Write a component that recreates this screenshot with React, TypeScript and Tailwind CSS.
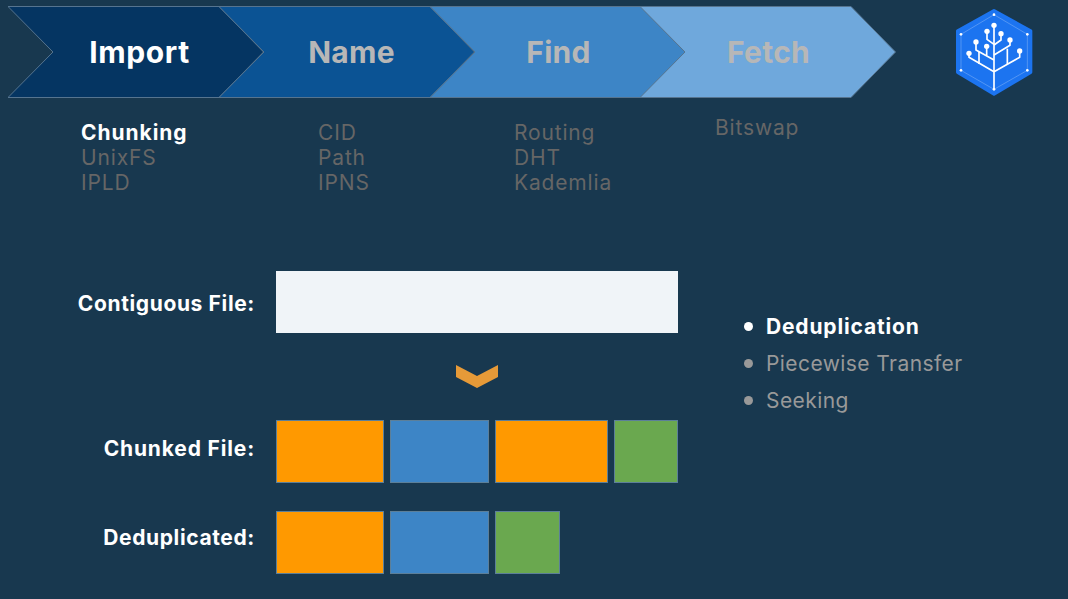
import React from 'react';

const STEPS = [
    { label: 'Import', fill: '#053562', text: 'text-white tracking-[0.02em]', box: 'pl-[7px]' },
    { label: 'Name', fill: '#0b5394', text: 'text-[#b7b7b7] tracking-[0.01em]', box: '-ml-[45px] pl-[9px]' },
    { label: 'Find', fill: '#3d85c6', text: 'text-[#b7b7b7] tracking-[0.01em]', box: '-ml-[45px] pl-[1px]' },
    { label: 'Fetch', fill: '#6fa8dc', text: 'text-[#b7b7b7] tracking-[0.01em]', box: '-ml-[46px] pl-[1px]' },
];

const TOPICS = [
    { width: 'w-[237px]', items: ['Chunking', 'UnixFS', 'IPLD'], top: 'pt-0' },
    { width: 'w-[196px]', items: ['CID', 'Path', 'IPNS'], top: 'pt-0' },
    { width: 'w-[201px]', items: ['Routing', 'DHT', 'Kademlia'], top: 'pt-0' },
    { width: 'w-[120px]', items: ['Bitswap'], top: '-mt-[5px]' },
];

const IpfsLogo = () => (
    <svg viewBox="0 0 300 300" className="w-[100px] h-[100px]">
        <polygon points="147,32 257,93 257,217 147,282 38,217 38,93" fill="#1c74f0" stroke="#1c74f0" strokeWidth="10" strokeLinejoin="round" />
        <polygon points="147,44 247,103 247,211 147,268 48,211 48,103" fill="none" stroke="#6ea6f4" strokeWidth="2" />
        <g fill="none" stroke="#fff" strokeWidth="5" strokeLinejoin="round">
            <path d="M147 268V76" />
            <path d="M147 215L72 172V160" />
            <path d="M147 215L224 172V153" />
            <path d="M147 180L93 150V126" />
            <path d="M125 167V139" />
            <path d="M102 192V156" />
            <path d="M187 192V146" />
            <path d="M147 165L195 136V120" />
            <path d="M147 133L126 118V94" />
            <path d="M147 135L168 120V101" />
        </g>
        <g fill="#fff">
            <circle cx="147" cy="76" r="8" />
            <circle cx="126" cy="94" r="8" />
            <circle cx="168" cy="101" r="8" />
            <circle cx="93" cy="126" r="8" />
            <circle cx="195" cy="120" r="8" />
            <circle cx="125" cy="139" r="8" />
            <circle cx="72" cy="160" r="8" />
            <circle cx="224" cy="153" r="8" />
            <circle cx="147" cy="44" r="4" />
            <circle cx="247" cy="103" r="4" />
            <circle cx="247" cy="211" r="4" />
            <circle cx="147" cy="268" r="4" />
            <circle cx="48" cy="211" r="4" />
            <circle cx="48" cy="103" r="4" />
        </g>
    </svg>
);

const Block = ({ className }: { className: string }) => (
    <div className={`h-[63px] shrink-0 border border-[#5c7f99] ${className}`} />
);

const LABEL = 'w-[255px] shrink-0 text-right text-white font-bold text-[21px]';

const App = () => {
    return (
        <div className="w-screen h-screen overflow-hidden bg-[#18384f] font-['Inter','Liberation_Sans',sans-serif]">
            {/* Process arrows */}
            <div className="flex pl-[8px] pt-[6px] h-[100px]">
                {STEPS.map((step) => (
                    <div key={step.label} className={`relative w-[256px] h-[92px] flex items-center justify-center ${step.box}`}>
                        <svg viewBox="0 0 256 92" className="absolute inset-0 w-full h-full">
                            <polygon points="0,0.5 211,0.5 255.5,46 211,91.5 0,91.5 45,46" fill={step.fill} stroke="#56748f" strokeWidth="1" />
                        </svg>
                        <span className={`relative text-[30px] font-bold ${step.text}`}>{step.label}</span>
                    </div>
                ))}
                <div className="ml-[49px] -mt-[6px]">
                    <IpfsLogo />
                </div>
            </div>

            {/* Topic lists */}
            <div className="flex pl-[81px] pt-[20px] h-[171px] text-[21px] leading-[25px] text-[#666666] tracking-[0.04em]">
                {TOPICS.map((col) => (
                    <div key={col.items[0]} className={`${col.width} ${col.top}`}>
                        {col.items.map((item) => (
                            <div key={item} className={item === 'Chunking' ? 'text-white font-bold tracking-[0.045em]' : ''}>{item}</div>
                        ))}
                    </div>
                ))}
            </div>

            <div className="flex">
                {/* File rows */}
                <div className="w-[678px] shrink-0 flex flex-col">
                    <div className="flex items-center">
                        <div className={`${LABEL} pt-[4px] tracking-[0.03em]`}>Contiguous File:</div>
                        <div className="ml-[21px] w-[402px] h-[62px] bg-[#f0f4f8]" />
                    </div>
                    <div className="pl-[456px] pt-[32px] pb-[32px]">
                        <svg viewBox="0 0 42 23" className="w-[42px] h-[23px]">
                            <polygon points="0,0 21,11 42,0 42,12 21,23 0,12" fill="#e69a38" />
                        </svg>
                    </div>
                    <div className="flex items-center">
                        <div className={`${LABEL} pb-[5px] tracking-[0.04em]`}>Chunked File:</div>
                        <div className="ml-[21px] flex gap-[6px]">
                            <Block className="w-[108px] bg-[#ff9900]" />
                            <Block className="w-[99px] bg-[#3d85c6]" />
                            <Block className="w-[113px] bg-[#ff9900]" />
                            <Block className="w-[64px] bg-[#6aa84f]" />
                        </div>
                    </div>
                    <div className="flex items-center mt-[28px]">
                        <div className={`${LABEL} pb-[10px] tracking-[0.03em]`}>Deduplicated:</div>
                        <div className="ml-[21px] flex gap-[6px]">
                            <Block className="w-[108px] bg-[#ff9900]" />
                            <Block className="w-[99px] bg-[#3d85c6]" />
                            <Block className="w-[65px] bg-[#6aa84f]" />
                        </div>
                    </div>
                </div>

                {/* Benefits */}
                <div className="ml-[66px] pt-[43px] flex flex-col gap-[12px] text-[21px] leading-[25px] text-[#999999] tracking-[0.02em]">
                    {['Deduplication', 'Piecewise Transfer', 'Seeking'].map((item, i) => (
                        <div key={item} className={`flex items-center gap-[13px] ${i === 0 ? 'text-white font-bold tracking-[0.04em]' : ''}`}>
                            <span className={`w-[9px] h-[9px] rounded-full ${i === 0 ? 'bg-white' : 'bg-[#999999]'}`} />
                            {item}
                        </div>
                    ))}
                </div>
            </div>
        </div>
    );
};

export default App;
